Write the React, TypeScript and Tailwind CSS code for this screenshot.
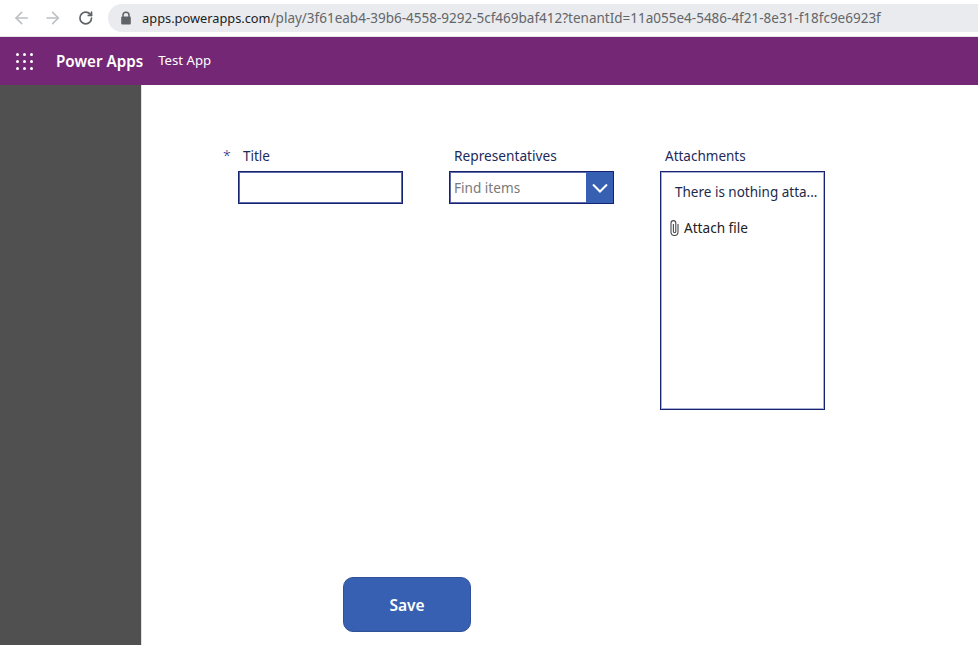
import { ArrowLeft, ArrowRight, RotateCw } from "lucide-react"

const font = "font-['Noto_Sans',sans-serif]"

function AppsGrid() {
  const dots = [0, 1, 2, 3, 4, 5, 6, 7, 8]
  return (
    <div className="grid grid-cols-3 gap-x-[4px] gap-y-[4px] w-[17px]">
      {dots.map((d) => (
        <span key={d} className="w-[3px] h-[3px] rounded-full bg-white" />
      ))}
    </div>
  )
}

function LockIcon() {
  return (
    <svg width="12" height="14" viewBox="0 0 12 14" className="text-[#5f6368]">
      <path d="M3 6V4.2a3 3 0 0 1 6 0V6" fill="none" stroke="currentColor" strokeWidth="1.5" />
      <rect x="1.2" y="5.5" width="9.6" height="8" rx="1" fill="currentColor" />
    </svg>
  )
}

function ClipIcon() {
  return (
    <svg width="9" height="16" viewBox="0 0 9 16" fill="none" stroke="#4a4a4a" strokeWidth="1.1">
      <path d="M8 4v8a3.5 3.5 0 0 1-7 0V3a2.4 2.4 0 0 1 4.8 0v8.5a1.2 1.2 0 0 1-2.4 0V4" />
    </svg>
  )
}

export default function App() {
  return (
    <div className={`w-[978px] h-[645px] overflow-hidden bg-white flex flex-col ${font}`}>
      {/* browser bar */}
      <div className="h-[37px] shrink-0 flex items-center bg-white pb-[1px] border-b border-[#e3e3e3]">
        <ArrowLeft size={20} strokeWidth={2} className="ml-[12px] text-[#bdbfc2]" />
        <ArrowRight size={20} strokeWidth={2} className="ml-[12px] text-[#bdbfc2]" />
        <RotateCw size={16} strokeWidth={2.6} className="ml-[15px] text-[#5f6368]" />
        <div className="ml-[15px] w-[900px] h-[28px] rounded-l-full bg-[#e9ebee] flex items-center pl-[12px]">
          <LockIcon />
          <span className="ml-[10px] pt-[1px] text-[13.5px] whitespace-nowrap text-[#63666a]">
            <span className="text-[12.8px] text-[#202124]">apps.powerapps.com</span>/play/3f61eab4-39b6-4558-9292-5cf469baf412?tenantId=11a055e4-5486-4f21-8e31-f18fc9e6923f
          </span>
        </div>
      </div>

      {/* app header */}
      <div className="h-[48px] shrink-0 bg-[#742774] flex items-center text-white">
        <div className="ml-[16px]">
          <AppsGrid />
        </div>
        <span className="ml-[23px] text-[15.2px] font-semibold">Power Apps</span>
        <span className="ml-[15px] text-[13.2px]">Test App</span>
      </div>

      <div className="flex-1 flex min-h-0">
        <div className="w-[141px] bg-[#505050] shrink-0" />
        <div className="flex-1 border-l border-[#e1e1e1] pl-[96px] pt-[62px]">
          <div className="flex gap-[46px] h-[430px]">
            <div className="w-[165px] relative">
              <span className="absolute left-[-15px] top-0 text-[14px] font-light leading-[18px] text-[#1a237e]">*</span>
              <div className="h-[24px] pl-[5px] text-[13.5px] leading-[18px] text-[#1c2a5c]">Title</div>
              <div className="h-[33px] border border-[#14226f] shadow-[inset_0_0_0_1px_#5f69ab] bg-white" />
            </div>
            <div className="w-[165px]">
              <div className="h-[24px] pl-[5px] text-[13.7px] leading-[18px] text-[#1c2a5c]">Representatives</div>
              <div className="h-[33px] border border-[#14226f] shadow-[inset_0_0_0_1px_#5f69ab] flex items-center">
                <span className="flex-1 pl-[4px] pt-[1px] text-[13.6px] text-[#7a7a7a]">Find items</span>
                <div className="w-[27px] h-full bg-[#3860b2] flex items-center justify-center">
                  <svg width="16" height="10" viewBox="0 0 16 10" fill="none" stroke="white" strokeWidth="2">
                    <path d="M1 1.5l7 7 7-7" />
                  </svg>
                </div>
              </div>
            </div>
            <div className="w-[165px]">
              <div className="h-[24px] pl-[5px] text-[13.5px] leading-[18px] text-[#1c2a5c]">Attachments</div>
              <div className="h-[239px] border border-[#14226f] shadow-[inset_0_0_0_1px_#aab0d4] pt-[11px]">
                <div className="pl-[14px] text-[13.5px] leading-[18px] whitespace-nowrap text-[#1c2a4c]">There is nothing atta...</div>
                <div className="mt-[18px] pl-[9px] flex items-center text-[13.6px] leading-[18px] text-[#222]">
                  <ClipIcon />
                  <span className="ml-[5px]">Attach file</span>
                </div>
              </div>
            </div>
          </div>
          <button className="ml-[105px] w-[128px] h-[55px] rounded-[10px] bg-[#3860b2] border border-[#2f5198] pt-[3px] text-white text-[15.5px] font-semibold">
            Save
          </button>
        </div>
      </div>
    </div>
  )
}
